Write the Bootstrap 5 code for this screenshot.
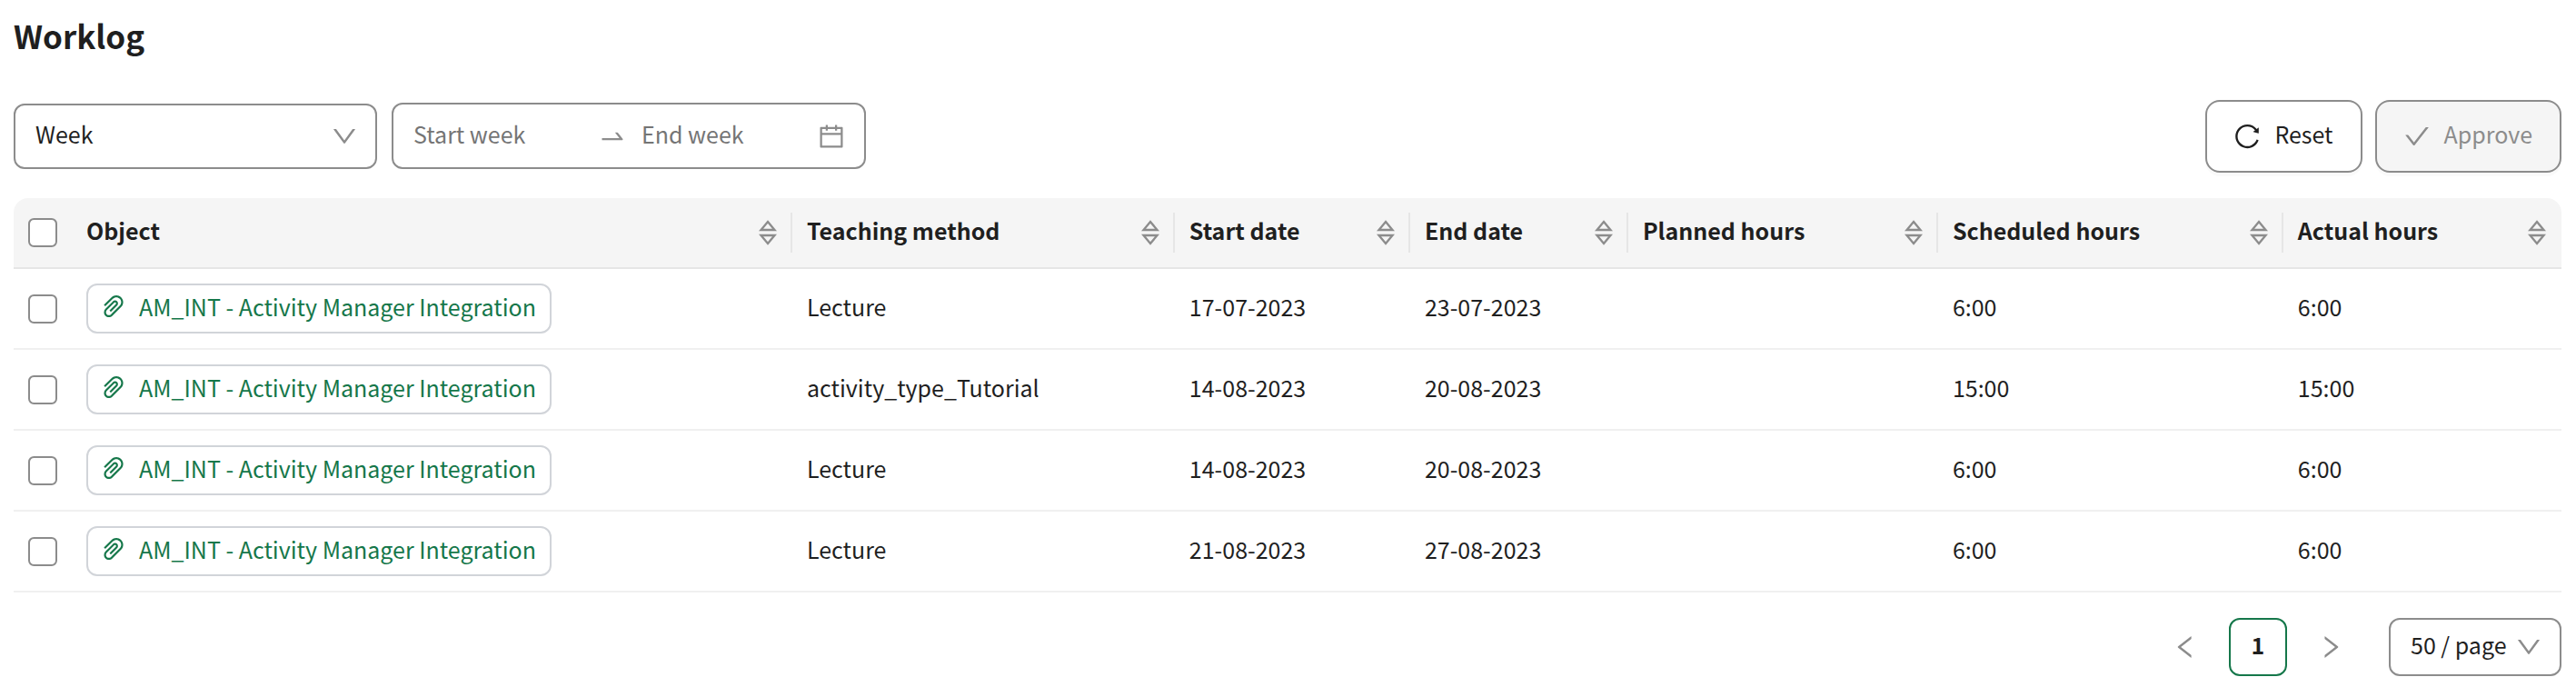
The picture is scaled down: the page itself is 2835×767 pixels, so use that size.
<!DOCTYPE html>
<html lang="en">
<head>
<meta charset="utf-8">
<meta name="viewport" content="width=device-width, initial-scale=1">
<title>Worklog</title>
<link href="https://cdn.jsdelivr.net/npm/bootstrap@5.3.0/dist/css/bootstrap.min.css" rel="stylesheet">
<style>
  :root { --ink: #1f1f1f; --line: #8c8c8c; --green: #15774a; }
  body {
    font-family: "Noto Sans CJK SC", sans-serif;
    font-size: 25px;
    line-height: 36px;
    color: var(--ink);
    background: #fff;
  }
  .page { padding: 12px 16px 20px 15px; }
  .page-title { font-size: 35px; line-height: 54px; font-weight: 700; margin-bottom: 44px; }
  .icon { width: 28px; height: 28px; fill: currentColor; flex: none; }

  /* filters */
  .filters { gap: 16px; padding-bottom: 4px; }
  .pick {
    color: var(--ink);
    border: 2px solid var(--line);
    border-radius: 12px;
    font-size: 25px;
    line-height: 36px;
    padding: 13px 60px 19px 22px;
    background-size: 28px 28px;
    background-position: right 20px center;
    background-image: url("data:image/svg+xml,%3Csvg xmlns='http://www.w3.org/2000/svg' viewBox='64 64 896 896'%3E%3Cpath fill='%238c8c8c' d='M884 256h-75c-5.1 0-9.9 2.5-12.9 6.6L512 654.2 227.9 262.6c-3-4.1-7.8-6.6-12.9-6.6h-75c-6.5 0-10.3 7.4-6.5 12.7l352.6 486.1c12.8 17.6 39 17.6 51.7 0l352.6-486.1c3.9-5.3.1-12.7-6.4-12.7z'/%3E%3C/svg%3E");
  }
  .pick-unit { width: 400px; }
  .pick-size { width: 190px; height: 64px; padding: 9px 52px 15px 22px; }
  .range { width: 522px; height: 73px; border: 2px solid var(--line); border-radius: 12px; padding: 0 22px; color: var(--line); }
  .range input {
    flex: 1 1 0; min-width: 0; border: 0; outline: 0; background: none;
    padding: 0 0 6px; height: 42px; font-size: 25px; line-height: 36px; color: var(--ink);
  }
  .range input:first-child { flex: 0 0 203px; }
  .range input::placeholder { color: #757575; opacity: 1; }
  .range .swap { width: 32px; height: 32px; margin-right: 16px; }

  /* actions */
  .actions { gap: 14px; }
  .action {
    --bs-btn-color: var(--ink);
    --bs-btn-border-color: var(--line);
    --bs-btn-disabled-color: var(--line);
    --bs-btn-disabled-border-color: var(--line);
    --bs-btn-disabled-bg: #f5f5f5;
    --bs-btn-disabled-opacity: 1;
    height: 80px; border-width: 2px; border-radius: 16px;
    font-size: 25px; line-height: 36px; padding: 0 30px;
    box-shadow: 0 4px 0 rgba(0, 0, 0, .02);
  }
  .action .icon { margin-right: 16px; }
  .raised { padding-bottom: 6px; }

  /* table */
  .worklog { margin: 28px 0 28px; table-layout: fixed; border-collapse: separate; border-spacing: 0; min-width: 1800px; color: var(--ink); }
  .worklog > :not(caption) > * > * { padding: 0 16px; border-bottom: 2px solid #f0f0f0; box-shadow: none; background-color: #fff; color: var(--ink); vertical-align: middle; }
  .worklog > thead > tr > th { height: 78px; background-color: #f5f5f5; border-bottom-color: #e6e6e6; font-weight: 700; }
  .worklog > thead > tr > th:first-child { border-top-left-radius: 16px; }
  .worklog > thead > tr > th:last-child { border-top-right-radius: 16px; }
  .worklog > thead > tr > th.split { background: linear-gradient(#e6e6e6, #e6e6e6) right center / 2px 44px no-repeat #f5f5f5; }
  .worklog > tbody > tr > td { height: 89px; padding-bottom: 6px; }
  .worklog > tbody > tr > td.whole { padding-bottom: 0; }
  .sort { width: 20px; height: 28px; fill: none; stroke: var(--line); stroke-width: 2.4; }
  .sort-btn { border: 0; background: none; padding: 0 1px; line-height: 0; }
  .tick { width: 32px; height: 32px; margin: 0; display: block; border: 2px solid var(--line); border-radius: 8px; background-color: #fff; }
  .chip {
    display: inline-flex; align-items: center; gap: 14px; height: 55px; vertical-align: middle;
    border: 2px solid #d1d4d9; border-radius: 12px; padding: 0 15px 6px 14px;
    color: var(--green); text-decoration: none; white-space: nowrap;
  }
  .chip:hover { color: #0d5c37; }

  /* pagination */
  .pager { gap: 16px; }
  .pager button { width: 64px; height: 64px; border: 0; background: none; color: var(--line); padding: 0; border-radius: 12px; }
  .pager .current { border: 2px solid var(--green); color: var(--ink); font-weight: 700; padding-bottom: 6px; }
</style>
</head>
<body>
<svg class="d-none" aria-hidden="true">
  <symbol id="clip" viewBox="64 64 896 896"><path d="M779.3 196.6c-94.2-94.2-247.6-94.2-341.7 0l-261 260.8c-1.7 1.7-2.6 4-2.6 6.4s.9 4.7 2.6 6.4l36.9 36.9a9 9 0 0012.7 0l261-260.8c32.4-32.4 75.5-50.2 121.3-50.2s88.9 17.8 121.2 50.2c32.4 32.4 50.2 75.5 50.2 121.2 0 45.8-17.8 88.8-50.2 121.2l-266 265.9-43.1 43.1c-40.3 40.3-105.8 40.3-146.1 0-19.5-19.5-30.2-45.4-30.2-73s10.7-53.5 30.2-73l263.9-263.8c6.7-6.6 15.5-10.3 24.9-10.3h.1c9.4 0 18.1 3.7 24.7 10.3 6.7 6.7 10.3 15.5 10.3 24.9 0 9.3-3.7 18.1-10.3 24.7L372.4 653c-1.7 1.7-2.6 4-2.6 6.4s.9 4.7 2.6 6.4l36.9 36.9a9 9 0 0012.7 0l215.6-215.6c19.9-19.9 30.8-46.3 30.8-74.4s-11-54.6-30.8-74.4c-41.1-41.1-107.9-41-149 0L463 364 224.8 602.1A172.22 172.22 0 00174 724.8c0 46.3 18.1 89.8 50.8 122.5 33.9 33.8 78.3 50.7 122.7 50.7 44.4 0 88.8-16.9 122.6-50.7l309.2-309C824.8 492.7 850 432 850 367.5c.1-64.6-25.1-125.3-70.7-170.9z"/></symbol>
  <symbol id="sort" viewBox="0 0 20 28"><path d="M10 2l7.5 9h-15zM10 26l7.5-9h-15z"/></symbol>
</svg>

<main class="page">
  <h1 class="page-title">Worklog</h1>

  <div class="d-flex flex-wrap justify-content-between align-items-end gap-3">
    <div class="filters d-flex flex-wrap align-items-end">
      <select class="form-select pick pick-unit" aria-label="Period">
        <option>Week</option>
      </select>
      <div class="range d-flex align-items-center">
        <input type="text" placeholder="Start week" aria-label="Start week">
        <svg class="icon swap" viewBox="0 0 1024 1024" aria-hidden="true"><path d="M873.1 596.2l-164-208A32 32 0 00684 376h-64.8c-6.7 0-10.4 7.7-6.3 13l144.3 183H152c-4.4 0-8 3.6-8 8v60c0 4.4 3.6 8 8 8h695.9c26.8 0 41.7-30.8 25.2-51.8z"/></svg>
        <input type="text" placeholder="End week" aria-label="End week">
        <svg class="icon" viewBox="64 64 896 896" aria-hidden="true"><path d="M880 184H712v-64c0-4.4-3.6-8-8-8h-56c-4.4 0-8 3.6-8 8v64H384v-64c0-4.4-3.6-8-8-8h-56c-4.4 0-8 3.6-8 8v64H144c-17.7 0-32 14.3-32 32v664c0 17.7 14.3 32 32 32h736c17.7 0 32-14.3 32-32V216c0-17.7-14.3-32-32-32zm-40 656H184V460h656v380zM184 392V256h128v48c0 4.4 3.6 8 8 8h56c4.4 0 8-3.6 8-8v-48h256v48c0 4.4 3.6 8 8 8h56c4.4 0 8-3.6 8-8v-48h128v136H184z"/></svg>
      </div>
    </div>
    <div class="actions d-flex">
      <button type="button" class="btn action d-flex align-items-center">
        <svg class="icon" viewBox="64 64 896 896" aria-hidden="true"><path d="M909.1 209.3l-56.4 44.1C775.8 155.1 656.2 92 521.9 92 290 92 102.3 279.5 102 511.5 101.7 743.7 289.8 932 521.9 932c181.3 0 335.8-115 394.6-276.1 1.5-4.2-.7-8.9-4.9-10.3l-56.7-19.5a8 8 0 00-10.1 4.8c-1.8 5-3.8 10-5.9 14.9-17.3 41-42.1 77.8-73.7 109.4A344.77 344.77 0 01655.9 829c-42.3 17.9-87.4 27-133.8 27-46.5 0-91.5-9.1-133.8-27A341.5 341.5 0 01279 755.2a342.16 342.16 0 01-73.7-109.4c-17.9-42.4-27-87.4-27-133.9s9.1-91.5 27-133.9c17.3-41 42.1-77.8 73.7-109.4 31.6-31.6 68.4-56.4 109.3-73.8 42.3-17.9 87.4-27 133.8-27 46.5 0 91.5 9.1 133.8 27a341.5 341.5 0 01109.3 73.8c9.9 9.9 19.2 20.4 27.8 31.4l-60.2 47a8 8 0 003 14.1l175.6 43c5 1.2 9.9-2.6 9.9-7.7l.8-180.9c-.1-6.6-7.8-10.3-13-6.2z"/></svg>
        <span class="raised">Reset</span>
      </button>
      <button type="button" class="btn action d-flex align-items-center" disabled>
        <svg class="icon" viewBox="64 64 896 896" aria-hidden="true"><path d="M912 190h-69.9c-9.8 0-19.1 4.5-25.1 12.2L404.7 724.5 207 474a32 32 0 00-25.1-12.2H112c-6.7 0-10.4 7.7-6.3 12.9l273.9 347c12.8 16.2 37.4 16.2 50.3 0l488.4-618.9c4.1-5.1.4-12.8-6.3-12.8z"/></svg>
        <span class="raised">Approve</span>
      </button>
    </div>
  </div>

  <table class="table worklog">
    <colgroup>
      <col style="width:64px"><col style="width:28.28%"><col style="width:15.01%"><col style="width:9.24%"><col style="width:8.56%"><col style="width:12.16%"><col style="width:13.55%"><col>
    </colgroup>
    <thead>
      <tr>
        <th scope="col"><input class="form-check-input tick" type="checkbox" aria-label="Select all"></th>
        <th scope="col" class="split"><div class="d-flex align-items-center justify-content-between"><span class="raised">Object</span><button type="button" class="sort-btn" aria-label="Sort by object"><svg class="sort"><use href="#sort"/></svg></button></div></th>
        <th scope="col" class="split"><div class="d-flex align-items-center justify-content-between"><span class="raised">Teaching method</span><button type="button" class="sort-btn" aria-label="Sort by teaching method"><svg class="sort"><use href="#sort"/></svg></button></div></th>
        <th scope="col" class="split"><div class="d-flex align-items-center justify-content-between"><span class="raised">Start date</span><button type="button" class="sort-btn" aria-label="Sort by start date"><svg class="sort"><use href="#sort"/></svg></button></div></th>
        <th scope="col" class="split"><div class="d-flex align-items-center justify-content-between"><span class="raised">End date</span><button type="button" class="sort-btn" aria-label="Sort by end date"><svg class="sort"><use href="#sort"/></svg></button></div></th>
        <th scope="col" class="split"><div class="d-flex align-items-center justify-content-between"><span class="raised">Planned hours</span><button type="button" class="sort-btn" aria-label="Sort by planned hours"><svg class="sort"><use href="#sort"/></svg></button></div></th>
        <th scope="col" class="split"><div class="d-flex align-items-center justify-content-between"><span class="raised">Scheduled hours</span><button type="button" class="sort-btn" aria-label="Sort by scheduled hours"><svg class="sort"><use href="#sort"/></svg></button></div></th>
        <th scope="col"><div class="d-flex align-items-center justify-content-between"><span class="raised">Actual hours</span><button type="button" class="sort-btn" aria-label="Sort by actual hours"><svg class="sort"><use href="#sort"/></svg></button></div></th>
      </tr>
    </thead>
    <tbody>
      <tr>
        <td class="whole"><input class="form-check-input tick" type="checkbox" aria-label="Select row 1"></td>
        <td class="whole"><a class="chip" href="#"><svg class="icon" aria-hidden="true"><use href="#clip"/></svg>AM_INT - Activity Manager Integration</a></td>
        <td>Lecture</td><td>17-07-2023</td><td>23-07-2023</td><td></td><td>6:00</td><td>6:00</td>
      </tr>
      <tr>
        <td class="whole"><input class="form-check-input tick" type="checkbox" aria-label="Select row 2"></td>
        <td class="whole"><a class="chip" href="#"><svg class="icon" aria-hidden="true"><use href="#clip"/></svg>AM_INT - Activity Manager Integration</a></td>
        <td>activity_type_Tutorial</td><td>14-08-2023</td><td>20-08-2023</td><td></td><td>15:00</td><td>15:00</td>
      </tr>
      <tr>
        <td class="whole"><input class="form-check-input tick" type="checkbox" aria-label="Select row 3"></td>
        <td class="whole"><a class="chip" href="#"><svg class="icon" aria-hidden="true"><use href="#clip"/></svg>AM_INT - Activity Manager Integration</a></td>
        <td>Lecture</td><td>14-08-2023</td><td>20-08-2023</td><td></td><td>6:00</td><td>6:00</td>
      </tr>
      <tr>
        <td class="whole"><input class="form-check-input tick" type="checkbox" aria-label="Select row 4"></td>
        <td class="whole"><a class="chip" href="#"><svg class="icon" aria-hidden="true"><use href="#clip"/></svg>AM_INT - Activity Manager Integration</a></td>
        <td>Lecture</td><td>21-08-2023</td><td>27-08-2023</td><td></td><td>6:00</td><td>6:00</td>
      </tr>
    </tbody>
  </table>

  <nav class="pager d-flex justify-content-end align-items-center" aria-label="Pages">
    <button type="button" class="d-flex align-items-center justify-content-center" aria-label="Previous page"><svg class="icon" viewBox="64 64 896 896"><path d="M724 218.3V141c0-6.7-7.7-10.4-12.9-6.3L260.3 486.8a31.86 31.86 0 000 50.3l450.8 352.1c5.3 4.1 12.9.4 12.9-6.3v-77.3c0-4.9-2.3-9.6-6.1-12.6l-360-281 360-281.1c3.8-3 6.1-7.7 6.1-12.6z"/></svg></button>
    <button type="button" class="current" aria-current="page">1</button>
    <button type="button" class="d-flex align-items-center justify-content-center" aria-label="Next page"><svg class="icon" viewBox="64 64 896 896"><path d="M765.7 486.8L314.9 134.7A7.97 7.97 0 00302 141v77.3c0 4.9 2.3 9.6 6.1 12.6l360 281.1-360 281.1c-3.9 3-6.1 7.7-6.1 12.6V883c0 6.7 7.7 10.4 12.9 6.3l450.8-352.1a31.96 31.96 0 000-50.4z"/></svg></button>
    <select class="form-select pick pick-size ms-3" aria-label="Rows per page">
      <option>50 / page</option>
    </select>
  </nav>
</main>
<script src="https://cdn.jsdelivr.net/npm/bootstrap@5.3.0/dist/js/bootstrap.bundle.min.js"></script>
</body>
</html>
